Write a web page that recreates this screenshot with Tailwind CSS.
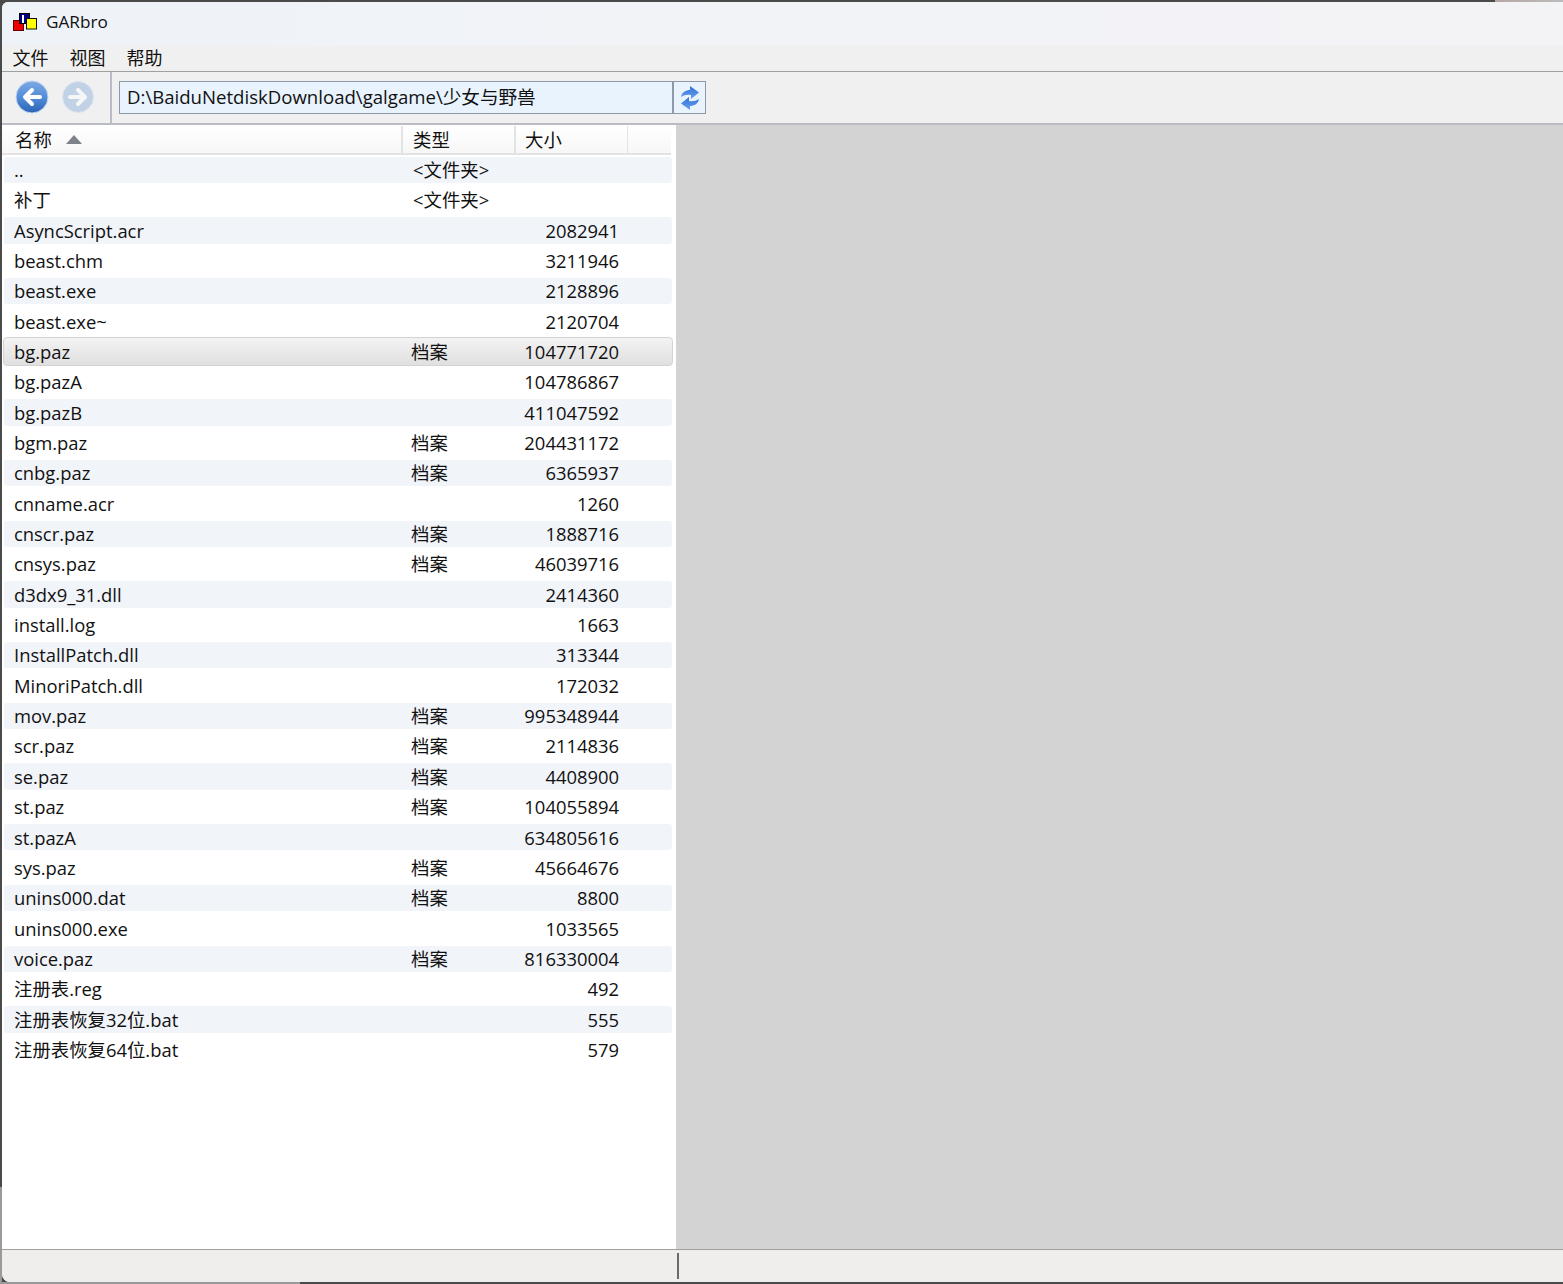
<!DOCTYPE html>
<html lang="zh">
<head>
  <meta charset="UTF-8">
  <title>GARbro</title>
  <script src="https://cdn.jsdelivr.net/npm/@tailwindcss/browser@4"></script>
</head>
<body class="relative bg-[#4a4a4a] h-[1284px] w-[1563px] overflow-hidden font-['Open_Sans','Noto_Sans_CJK_SC',sans-serif] text-[18.4px] text-[#111]">
  <!-- bits of desktop showing round the window -->
  <div class="absolute left-0 top-[1187px] w-[2px] h-[97px] bg-[#9a9a9a]"></div>
  <div class="absolute left-0 bottom-0 w-[300px] h-[2px] bg-[#999]"></div>
  <div class="absolute left-[1495px] top-0 right-0 h-[2px] bg-gradient-to-r from-[#b8a6a6] to-[#bbb]"></div>

  <div class="relative h-[1284px] pt-[2px] pl-[2px] pb-[2px]">
    <div class="h-full flex flex-col bg-[#f0f0f0] rounded-tl-[6px] rounded-bl-[8px] overflow-hidden">

      <!-- title bar -->
      <div class="h-[43px] shrink-0 flex items-center pb-[4px] bg-gradient-to-r from-[#eef3f9] via-[#f2f3f7] to-[#f3f3f6]">
        <svg class="ml-[11px] w-[25px] h-[18px]" viewBox="0 0 25 18">
          <rect x="0.5" y="7.5" width="10" height="10" fill="#ee0000" stroke="#600"/>
          <rect x="6.5" y="0.5" width="10" height="10" fill="#00008b" stroke="#000"/>
          <rect x="9" y="2" width="2" height="8" fill="#fff"/>
          <rect x="13.5" y="5.5" width="10" height="10.5" fill="#ffff00" stroke="#111"/>
        </svg>
        <span class="ml-[8px] text-[17.2px]">GARbro</span>
      </div>

      <!-- menu -->
      <div class="h-[27px] shrink-0 flex items-center pl-[10.5px] gap-[21px] bg-[#f0f0f0] border-b border-[#a0a0a0] text-[18px]">
        <span>文件</span><span>视图</span><span>帮助</span>
      </div>

      <!-- toolbar -->
      <div class="h-[53px] shrink-0 flex items-center bg-[#f0f0f0] border-b-2 border-[#b9bcc4]">
        <div class="w-[108px] h-full flex items-center border-r-2 border-[#b9bcc4] box-content">
          <svg class="ml-[12px] -mt-[2px] w-[36px] h-[36px]" viewBox="0 0 36 36">
            <defs>
              <linearGradient id="navBlue" x1="0" y1="0" x2="0" y2="1"><stop offset="0" stop-color="#7fa9e4"/><stop offset="0.55" stop-color="#4f8ad8"/><stop offset="1" stop-color="#2c62b6"/></linearGradient>
              <linearGradient id="syncBlue" x1="0" y1="0" x2="0" y2="1"><stop offset="0" stop-color="#2f6fd8"/><stop offset="1" stop-color="#6ba3ee"/></linearGradient>
            </defs>
            <circle cx="18" cy="18" r="16" fill="url(#navBlue)" stroke="#c4d6ee"/>
            <path d="M11.5 18H26M18 11l-7 7 7 7" fill="none" stroke="#fff" stroke-width="4" stroke-linecap="round" stroke-linejoin="round"/>
          </svg>
          <svg class="ml-[10px] -mt-[2px] w-[36px] h-[36px] opacity-40" viewBox="0 0 36 36">
            <circle cx="18" cy="18" r="15.5" fill="#7ea6d8" stroke="#c4d6ee"/>
            <path d="M10 18h14.5M18 11l7 7-7 7" fill="none" stroke="#fff" stroke-width="4" stroke-linecap="round" stroke-linejoin="round"/>
          </svg>
        </div>
        <div class="ml-[7px] w-[555px] h-[33px] flex items-center bg-[#e8f3fe] border border-[#8d99a6] border-r-2 pl-[7px] pb-[1px] text-[18.6px]">D:\BaiduNetdiskDownload\galgame\少女与野兽</div>
        <div class="w-[32px] h-[33px] flex items-center justify-center bg-[#e8f3fe] border border-l-0 border-[#8d99a6]">
          <svg class="w-[20px] h-[26px]" viewBox="0 0 20 26" fill="url(#syncBlue)">
            <path d="M1 12C2 7 6 5 10 5V1l9 6.500L11 14v-4C7 9.500 4 10 1 12z"/>
            <path d="M19 14c-1 5-5 7-9 7v4l-9-6.500L9 12v4c4 .5 7 0 10-2z"/>
          </svg>
        </div>
      </div>

      <!-- panes -->
      <div class="flex-1 flex min-h-0">
        <div class="w-[674px] shrink-0 bg-white flex flex-col pr-[4px]">
          <div class="h-[30px] shrink-0 mr-[1px] flex items-center pt-[1px] border-b-2 border-[#e3e3e3] bg-gradient-to-b from-white to-[#f7f7f7]">
            <div class="w-[401px] h-full flex items-center pl-[13px] border-r-2 border-[#e3e3e3]">
              <span>名称</span>
              <svg class="ml-[14px] w-[16px] h-[9px]" viewBox="0 0 16 9"><path d="M8 0l8 9H0z" fill="#7d8389"/></svg>
            </div>
            <div class="w-[113px] h-full flex items-center pl-[10px] border-r-2 border-[#e3e3e3]">类型</div>
            <div class="w-[112px] h-full flex items-center pl-[9px] border-r border-[#e3e3e3]">大小</div>
          </div>

          <div class="flex-1 flex flex-col pl-[2px] -mt-[0.4px]">
            <div class="my-[2px] h-[26.35px] flex items-center rounded-[3px] bg-[#f1f4f9]"><div class="w-[397px] pl-[10px]">..</div><div class="pl-[12px]">&lt;文件夹&gt;</div></div>
            <div class="my-[2px] h-[26.35px] flex items-center"><div class="w-[397px] pl-[10px]">补丁</div><div class="pl-[12px]">&lt;文件夹&gt;</div></div>
            <div class="my-[2px] h-[26.35px] flex items-center rounded-[3px] bg-[#f1f4f9]"><div class="w-[397px] pl-[10px]">AsyncScript.acr</div><div class="w-[218px] text-right">2082941</div></div>
            <div class="my-[2px] h-[26.35px] flex items-center"><div class="w-[397px] pl-[10px]">beast.chm</div><div class="w-[218px] text-right">3211946</div></div>
            <div class="my-[2px] h-[26.35px] flex items-center rounded-[3px] bg-[#f1f4f9]"><div class="w-[397px] pl-[10px]">beast.exe</div><div class="w-[218px] text-right">2128896</div></div>
            <div class="my-[2px] h-[26.35px] flex items-center"><div class="w-[397px] pl-[10px]">beast.exe~</div><div class="w-[218px] text-right">2120704</div></div>
            <div class="my-[0.67px] h-[29px] -mx-[1px] flex items-center rounded-[4px] border border-[#d3d3d3] bg-gradient-to-b from-[#f3f3f3] to-[#e0e0e0]"><div class="w-[398px] pl-[10px]">bg.paz</div><div class="w-[113px] pl-[9px]">档案</div><div class="w-[104px] text-right">104771720</div></div>
            <div class="my-[2px] h-[26.35px] flex items-center"><div class="w-[397px] pl-[10px]">bg.pazA</div><div class="w-[218px] text-right">104786867</div></div>
            <div class="my-[2px] h-[26.35px] flex items-center rounded-[3px] bg-[#f1f4f9]"><div class="w-[397px] pl-[10px]">bg.pazB</div><div class="w-[218px] text-right">411047592</div></div>
            <div class="my-[2px] h-[26.35px] flex items-center"><div class="w-[397px] pl-[10px]">bgm.paz</div><div class="w-[113px] pl-[10px]">档案</div><div class="w-[105px] text-right">204431172</div></div>
            <div class="my-[2px] h-[26.35px] flex items-center rounded-[3px] bg-[#f1f4f9]"><div class="w-[397px] pl-[10px]">cnbg.paz</div><div class="w-[113px] pl-[10px]">档案</div><div class="w-[105px] text-right">6365937</div></div>
            <div class="my-[2px] h-[26.35px] flex items-center"><div class="w-[397px] pl-[10px]">cnname.acr</div><div class="w-[218px] text-right">1260</div></div>
            <div class="my-[2px] h-[26.35px] flex items-center rounded-[3px] bg-[#f1f4f9]"><div class="w-[397px] pl-[10px]">cnscr.paz</div><div class="w-[113px] pl-[10px]">档案</div><div class="w-[105px] text-right">1888716</div></div>
            <div class="my-[2px] h-[26.35px] flex items-center"><div class="w-[397px] pl-[10px]">cnsys.paz</div><div class="w-[113px] pl-[10px]">档案</div><div class="w-[105px] text-right">46039716</div></div>
            <div class="my-[2px] h-[26.35px] flex items-center rounded-[3px] bg-[#f1f4f9]"><div class="w-[397px] pl-[10px]">d3dx9_31.dll</div><div class="w-[218px] text-right">2414360</div></div>
            <div class="my-[2px] h-[26.35px] flex items-center"><div class="w-[397px] pl-[10px]">install.log</div><div class="w-[218px] text-right">1663</div></div>
            <div class="my-[2px] h-[26.35px] flex items-center rounded-[3px] bg-[#f1f4f9]"><div class="w-[397px] pl-[10px]">InstallPatch.dll</div><div class="w-[218px] text-right">313344</div></div>
            <div class="my-[2px] h-[26.35px] flex items-center"><div class="w-[397px] pl-[10px]">MinoriPatch.dll</div><div class="w-[218px] text-right">172032</div></div>
            <div class="my-[2px] h-[26.35px] flex items-center rounded-[3px] bg-[#f1f4f9]"><div class="w-[397px] pl-[10px]">mov.paz</div><div class="w-[113px] pl-[10px]">档案</div><div class="w-[105px] text-right">995348944</div></div>
            <div class="my-[2px] h-[26.35px] flex items-center"><div class="w-[397px] pl-[10px]">scr.paz</div><div class="w-[113px] pl-[10px]">档案</div><div class="w-[105px] text-right">2114836</div></div>
            <div class="my-[2px] h-[26.35px] flex items-center rounded-[3px] bg-[#f1f4f9]"><div class="w-[397px] pl-[10px]">se.paz</div><div class="w-[113px] pl-[10px]">档案</div><div class="w-[105px] text-right">4408900</div></div>
            <div class="my-[2px] h-[26.35px] flex items-center"><div class="w-[397px] pl-[10px]">st.paz</div><div class="w-[113px] pl-[10px]">档案</div><div class="w-[105px] text-right">104055894</div></div>
            <div class="my-[2px] h-[26.35px] flex items-center rounded-[3px] bg-[#f1f4f9]"><div class="w-[397px] pl-[10px]">st.pazA</div><div class="w-[218px] text-right">634805616</div></div>
            <div class="my-[2px] h-[26.35px] flex items-center"><div class="w-[397px] pl-[10px]">sys.paz</div><div class="w-[113px] pl-[10px]">档案</div><div class="w-[105px] text-right">45664676</div></div>
            <div class="my-[2px] h-[26.35px] flex items-center rounded-[3px] bg-[#f1f4f9]"><div class="w-[397px] pl-[10px]">unins000.dat</div><div class="w-[113px] pl-[10px]">档案</div><div class="w-[105px] text-right">8800</div></div>
            <div class="my-[2px] h-[26.35px] flex items-center"><div class="w-[397px] pl-[10px]">unins000.exe</div><div class="w-[218px] text-right">1033565</div></div>
            <div class="my-[2px] h-[26.35px] flex items-center rounded-[3px] bg-[#f1f4f9]"><div class="w-[397px] pl-[10px]">voice.paz</div><div class="w-[113px] pl-[10px]">档案</div><div class="w-[105px] text-right">816330004</div></div>
            <div class="my-[2px] h-[26.35px] flex items-center"><div class="w-[397px] pl-[10px]">注册表.reg</div><div class="w-[218px] text-right">492</div></div>
            <div class="my-[2px] h-[26.35px] flex items-center rounded-[3px] bg-[#f1f4f9]"><div class="w-[397px] pl-[10px]">注册表恢复32位.bat</div><div class="w-[218px] text-right">555</div></div>
            <div class="my-[2px] h-[26.35px] flex items-center"><div class="w-[397px] pl-[10px]">注册表恢复64位.bat</div><div class="w-[218px] text-right">579</div></div>
          </div>
        </div>
        <div class="flex-1 bg-[#d3d3d3]"></div>
      </div>

      <!-- status bar -->
      <div class="h-[33px] shrink-0 flex items-center bg-[#f0eded] border-t border-[#a0a0a0]">
        <div class="ml-[675px] w-[2px] h-[26px] bg-[#6a6a6a]"></div>
      </div>
    </div>
  </div>
</body>
</html>
